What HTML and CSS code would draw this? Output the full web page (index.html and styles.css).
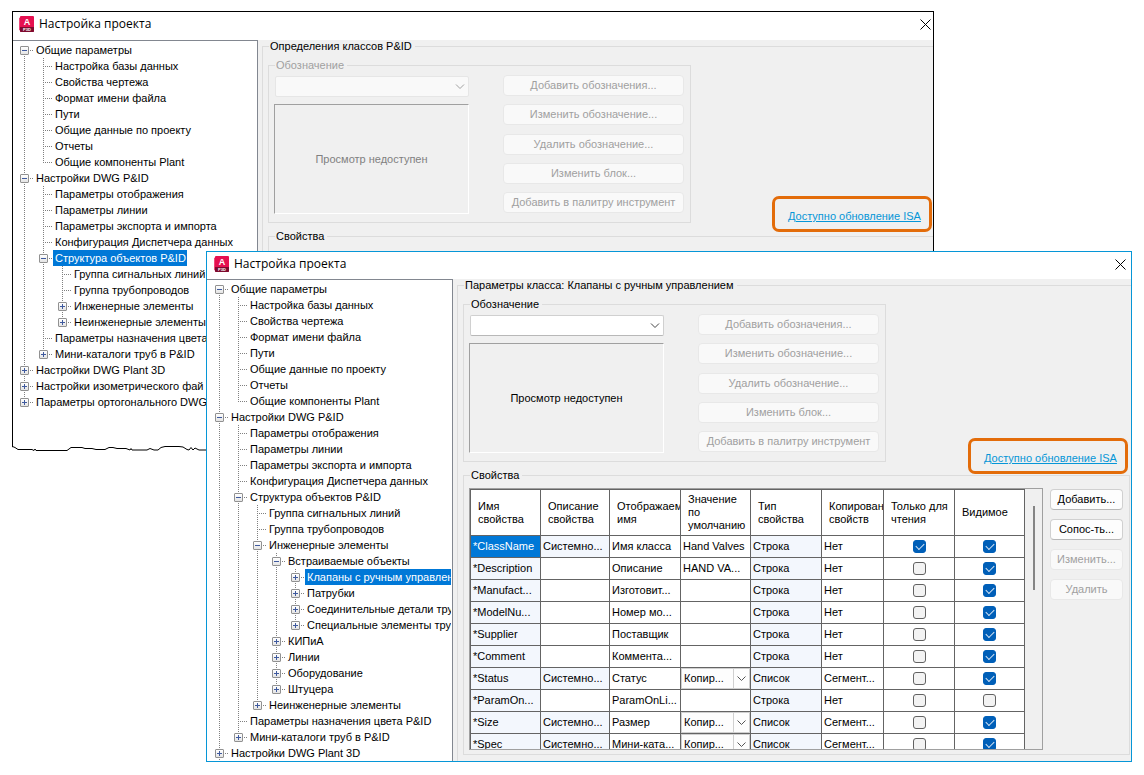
FILE: index.html
```html
<!DOCTYPE html>
<html lang="ru">
<head>
  <meta charset="UTF-8" />
  <title>Настройка проекта</title>
  <link rel="stylesheet" href="styles.css">
</head>
<body>
  <div class="desktop">

    <!-- back window -->
    <section class="window window-back">
      <header class="titlebar">
        <svg class="app-icon" viewBox="0 0 15 17">
          <path d="M0 2 L2 1 V15 L0 14 Z" fill="#f0477a" />
          <rect x="1" y="0" width="14" height="16" rx="1" fill="#e51050" />
          <path d="M1 11 H15 V15 Q15 16 14 16 H2 Q1 16 1 15 Z" fill="#7d0a2e" />
          <text class="icon-letter" x="8" y="9">A</text>
          <text class="icon-sub" x="8" y="15">P3D</text>
        </svg>
        <h1>Настройка проекта</h1>
        <button class="close" aria-label="Закрыть">
          <svg viewBox="0 0 11 11"><path d="M0.5 0.5 L10.5 10.5 M10.5 0.5 L0.5 10.5" /></svg>
        </button>
      </header>
      <div class="window-body">
        <nav class="tree">
          <ul>
            <li><button class="toggle"></button><span>Общие параметры</span>
              <ul>
                <li><span>Настройка базы данных</span></li>
                <li><span>Свойства чертежа</span></li>
                <li><span>Формат имени файла</span></li>
                <li><span>Пути</span></li>
                <li><span>Общие данные по проекту</span></li>
                <li><span>Отчеты</span></li>
                <li><span>Общие компоненты Plant</span></li>
              </ul>
            </li>
            <li><button class="toggle"></button><span>Настройки DWG P&amp;ID</span>
              <ul>
                <li><span>Параметры отображения</span></li>
                <li><span>Параметры линии</span></li>
                <li><span>Параметры экспорта и импорта</span></li>
                <li><span>Конфигурация Диспетчера данных</span></li>
                <li><button class="toggle"></button><span class="selected">Структура объектов P&amp;ID</span>
                  <ul>
                    <li><span>Группа сигнальных линий</span></li>
                    <li><span>Группа трубопроводов</span></li>
                    <li><button class="toggle plus"></button><span>Инженерные элементы</span></li>
                    <li><button class="toggle plus"></button><span>Неинженерные элементы</span></li>
                  </ul>
                </li>
                <li><span>Параметры назначения цвета</span></li>
                <li><button class="toggle plus"></button><span>Мини-каталоги труб в P&amp;ID</span></li>
              </ul>
            </li>
            <li><button class="toggle plus"></button><span>Настройки DWG Plant 3D</span></li>
            <li><button class="toggle plus"></button><span>Настройки изометрического фай</span></li>
            <li><button class="toggle plus"></button><span>Параметры ортогонального DWG</span></li>
          </ul>
        </nav>
        <main class="pane">
          <fieldset class="group outer">
            <legend>Определения классов P&amp;ID</legend>
            <div class="symbol-row">
              <fieldset class="group symbol" disabled>
                <legend>Обозначение</legend>
                <div class="symbol-left">
                  <select class="combo" aria-label="Обозначение"><option></option></select>
                  <div class="preview">Просмотр недоступен</div>
                </div>
                <div class="symbol-buttons">
                  <button class="btn" disabled>Добавить обозначения...</button>
                  <button class="btn" disabled>Изменить обозначение...</button>
                  <button class="btn" disabled>Удалить обозначение...</button>
                  <button class="btn" disabled>Изменить блок...</button>
                  <button class="btn" disabled>Добавить в палитру инструмент</button>
                </div>
              </fieldset>
              <div class="callout"><a href="#">Доступно обновление ISA</a></div>
            </div>
            <fieldset class="group props">
              <legend>Свойства</legend>
            </fieldset>
          </fieldset>
        </main>
      </div>
      <svg class="torn" viewBox="0 0 195 6">
        <path class="paper" d="M0 2 L6 4 H56 L59 2 H71 L76 4 H94 L97 2 H102 L106 4 H146 L152 2 H170 L176 4 H195 V6 H0 Z" />
        <path class="edge" d="M0.5 1.5 L3 2.5 L6 4.5 H20 L22 5.5 L23 4 L24 5.5 H55 L59 2.5 H70 L73 3.5 H80 L84 4.5 H93 L97 2.5 H101 L105 3.5 H114 L118 5 L119 3.5 L120 5 H135 L138 3.5 L142 5 H146 L149 2.5 L153 1.5 H167 L171 2 L175 4.5 L177 5 L179 2.5 L181 5 L183 3 L187 5 H195" />
      </svg>
    </section>

    <!-- front window -->
    <section class="window window-front">
      <header class="titlebar">
        <svg class="app-icon" viewBox="0 0 15 17">
          <path d="M0 2 L2 1 V15 L0 14 Z" fill="#f0477a" />
          <rect x="1" y="0" width="14" height="16" rx="1" fill="#e51050" />
          <path d="M1 11 H15 V15 Q15 16 14 16 H2 Q1 16 1 15 Z" fill="#7d0a2e" />
          <text class="icon-letter" x="8" y="9">A</text>
          <text class="icon-sub" x="8" y="15">P3D</text>
        </svg>
        <h1>Настройка проекта</h1>
        <button class="close" aria-label="Закрыть">
          <svg viewBox="0 0 11 11"><path d="M0.5 0.5 L10.5 10.5 M10.5 0.5 L0.5 10.5" /></svg>
        </button>
      </header>
      <div class="window-body">
        <nav class="tree">
          <ul>
            <li><button class="toggle"></button><span>Общие параметры</span>
              <ul>
                <li><span>Настройка базы данных</span></li>
                <li><span>Свойства чертежа</span></li>
                <li><span>Формат имени файла</span></li>
                <li><span>Пути</span></li>
                <li><span>Общие данные по проекту</span></li>
                <li><span>Отчеты</span></li>
                <li><span>Общие компоненты Plant</span></li>
              </ul>
            </li>
            <li><button class="toggle"></button><span>Настройки DWG P&amp;ID</span>
              <ul>
                <li><span>Параметры отображения</span></li>
                <li><span>Параметры линии</span></li>
                <li><span>Параметры экспорта и импорта</span></li>
                <li><span>Конфигурация Диспетчера данных</span></li>
                <li><button class="toggle"></button><span>Структура объектов P&amp;ID</span>
                  <ul>
                    <li><span>Группа сигнальных линий</span></li>
                    <li><span>Группа трубопроводов</span></li>
                    <li><button class="toggle"></button><span>Инженерные элементы</span>
                      <ul>
                        <li><button class="toggle"></button><span>Встраиваемые объекты</span>
                          <ul>
                            <li><button class="toggle plus"></button><span class="selected">Клапаны с ручным управлен</span></li>
                            <li><button class="toggle plus"></button><span>Патрубки</span></li>
                            <li><button class="toggle plus"></button><span>Соединительные детали труб</span></li>
                            <li><button class="toggle plus"></button><span>Специальные элементы труб</span></li>
                          </ul>
                        </li>
                        <li><button class="toggle plus"></button><span>КИПиА</span></li>
                        <li><button class="toggle plus"></button><span>Линии</span></li>
                        <li><button class="toggle plus"></button><span>Оборудование</span></li>
                        <li><button class="toggle plus"></button><span>Штуцера</span></li>
                      </ul>
                    </li>
                    <li><button class="toggle plus"></button><span>Неинженерные элементы</span></li>
                  </ul>
                </li>
                <li><span>Параметры назначения цвета P&amp;ID</span></li>
                <li><button class="toggle plus"></button><span>Мини-каталоги труб в P&amp;ID</span></li>
              </ul>
            </li>
            <li class="more"><button class="toggle plus"></button><span>Настройки DWG Plant 3D</span></li>
          </ul>
        </nav>
        <main class="pane">
          <fieldset class="group outer">
            <legend>Параметры класса: Клапаны с ручным управлением</legend>
            <div class="symbol-row">
              <fieldset class="group symbol">
                <legend>Обозначение</legend>
                <div class="symbol-left">
                  <select class="combo" aria-label="Обозначение"><option></option></select>
                  <div class="preview">Просмотр недоступен</div>
                </div>
                <div class="symbol-buttons">
                  <button class="btn" disabled>Добавить обозначения...</button>
                  <button class="btn" disabled>Изменить обозначение...</button>
                  <button class="btn" disabled>Удалить обозначение...</button>
                  <button class="btn" disabled>Изменить блок...</button>
                  <button class="btn" disabled>Добавить в палитру инструмент</button>
                </div>
              </fieldset>
              <div class="callout"><a href="#">Доступно обновление ISA</a></div>
            </div>
            <fieldset class="group props">
              <legend>Свойства</legend>
              <div class="grid-box">
                <table>
                  <colgroup>
                    <col class="w70"><col class="w69"><col class="w71"><col class="w70">
                    <col class="w71"><col class="w62"><col class="w71"><col class="w70">
                  </colgroup>
                  <thead>
                    <tr>
                      <th>Имя свойства</th>
                      <th>Описание свойства</th>
                      <th>Отображаемое имя</th>
                      <th>Значение по умолчанию</th>
                      <th>Тип свойства</th>
                      <th>Копирование свойств</th>
                      <th>Только для чтения</th>
                      <th>Видимое</th>
                    </tr>
                  </thead>
                  <tbody>
                    <tr>
                      <td class="current">*ClassName</td><td class="ro">Системно...</td><td>Имя класса</td><td>Hand Valves</td>
                      <td class="ro">Строка</td><td>Нет</td>
                      <td class="check"><input type="checkbox" aria-label="Только для чтения" checked></td>
                      <td class="check"><input type="checkbox" aria-label="Видимое" checked></td>
                    </tr>
                    <tr>
                      <td class="ro">*Description</td><td></td><td>Описание</td><td>HAND VA...</td>
                      <td class="ro">Строка</td><td>Нет</td>
                      <td class="check"><input type="checkbox" aria-label="Только для чтения"></td>
                      <td class="check"><input type="checkbox" aria-label="Видимое" checked></td>
                    </tr>
                    <tr>
                      <td class="ro">*Manufact...</td><td></td><td>Изготовит...</td><td></td>
                      <td class="ro">Строка</td><td>Нет</td>
                      <td class="check"><input type="checkbox" aria-label="Только для чтения"></td>
                      <td class="check"><input type="checkbox" aria-label="Видимое" checked></td>
                    </tr>
                    <tr>
                      <td class="ro">*ModelNu...</td><td></td><td>Номер мо...</td><td></td>
                      <td class="ro">Строка</td><td>Нет</td>
                      <td class="check"><input type="checkbox" aria-label="Только для чтения"></td>
                      <td class="check"><input type="checkbox" aria-label="Видимое" checked></td>
                    </tr>
                    <tr>
                      <td class="ro">*Supplier</td><td></td><td>Поставщик</td><td></td>
                      <td class="ro">Строка</td><td>Нет</td>
                      <td class="check"><input type="checkbox" aria-label="Только для чтения"></td>
                      <td class="check"><input type="checkbox" aria-label="Видимое" checked></td>
                    </tr>
                    <tr>
                      <td class="ro">*Comment</td><td></td><td>Коммента...</td><td></td>
                      <td class="ro">Строка</td><td>Нет</td>
                      <td class="check"><input type="checkbox" aria-label="Только для чтения"></td>
                      <td class="check"><input type="checkbox" aria-label="Видимое" checked></td>
                    </tr>
                    <tr>
                      <td class="ro">*Status</td><td class="ro">Системно...</td><td>Статус</td>
                      <td class="pick"><select aria-label="Значение по умолчанию"><option>Копир...</option></select></td>
                      <td class="ro">Список</td><td>Сегмент...</td>
                      <td class="check"><input type="checkbox" aria-label="Только для чтения"></td>
                      <td class="check"><input type="checkbox" aria-label="Видимое" checked></td>
                    </tr>
                    <tr>
                      <td class="ro">*ParamOn...</td><td></td><td>ParamOnLi...</td><td></td>
                      <td class="ro">Строка</td><td>Нет</td>
                      <td class="check"><input type="checkbox" aria-label="Только для чтения"></td>
                      <td class="check"><input type="checkbox" aria-label="Видимое"></td>
                    </tr>
                    <tr>
                      <td class="ro">*Size</td><td class="ro">Системно...</td><td>Размер</td>
                      <td class="pick"><select aria-label="Значение по умолчанию"><option>Копир...</option></select></td>
                      <td class="ro">Список</td><td>Сегмент...</td>
                      <td class="check"><input type="checkbox" aria-label="Только для чтения"></td>
                      <td class="check"><input type="checkbox" aria-label="Видимое" checked></td>
                    </tr>
                    <tr>
                      <td class="ro">*Spec</td><td class="ro">Системно...</td><td>Мини-ката...</td>
                      <td class="pick"><select aria-label="Значение по умолчанию"><option>Копир...</option></select></td>
                      <td class="ro">Список</td><td>Сегмент...</td>
                      <td class="check"><input type="checkbox" aria-label="Только для чтения"></td>
                      <td class="check"><input type="checkbox" aria-label="Видимое" checked></td>
                    </tr>
                  </tbody>
                </table>
                <div class="scrollbar"><div class="thumb"></div></div>
              </div>
              <div class="side-buttons">
                <button class="btn">Добавить...</button>
                <button class="btn">Сопос-ть...</button>
                <button class="btn" disabled>Изменить...</button>
                <button class="btn" disabled>Удалить</button>
              </div>
            </fieldset>
          </fieldset>
        </main>
      </div>
    </section>

  </div>
</body>
</html>
```
FILE: styles.css
```css
* {
  box-sizing: border-box;
}
body {
  margin: 0;
  background: #fff;
  color: #000;
  font-family: "Liberation Sans", Arial, sans-serif;
  font-size: 11px;
  line-height: 13px;
}
button, select, input {
  font: inherit;
  margin: 0;
}
.desktop {
  position: relative;
  height: 100vh;
  min-height: 600px;
  overflow: hidden;
}

/* windows */
.window {
  position: absolute;
  display: flex;
  flex-direction: column;
  background: #fff;
}
.window-back {
  top: 11px;
  left: 12px;
  right: 210px;
  border: 1px solid #000;
  border-bottom: none;
}
.window-front {
  top: 251px;
  left: 206px;
  right: 12px;
  bottom: 13px;
  border: 1px solid #0696d7;
}
.titlebar {
  display: flex;
  align-items: center;
  flex: none;
  height: 27px;
  padding: 0 5px 3px 7px;
}
.window-back .titlebar {
  height: 28px;
  padding: 0 2px 4px 6px;
}
.app-icon {
  width: 15px;
  height: 17px;
}
.icon-letter {
  font-size: 9px;
  font-weight: bold;
  fill: #fff;
  text-anchor: middle;
}
.icon-sub {
  font-size: 4px;
  font-weight: bold;
  fill: #fff;
  text-anchor: middle;
}
.titlebar h1 {
  margin: 0 auto 0 5px;
  font-family: "Open Sans", "Segoe UI", sans-serif;
  font-size: 12px;
  font-weight: normal;
  line-height: 16px;
}
.close {
  width: 11px;
  height: 11px;
  padding: 0;
  border: none;
  background: none;
}
.close svg {
  display: block;
  width: 11px;
  height: 11px;
  stroke: #000;
  fill: none;
}
.window-body {
  display: flex;
  flex: 1;
  min-height: 0;
}

/* tree */
.tree {
  flex: none;
  width: 246px;
  padding: 1px 1px 0 3px;
  border-top: 1px solid #828790;
  border-right: 1px solid #828790;
  background: #fff;
  overflow: hidden;
}
.window-back .tree {
  width: 245px;
  padding: 1px 1px 35px 2px;
}
.tree ul {
  margin: 0;
  padding: 0;
  list-style: none;
}
.tree > ul {
  overflow: hidden;
}
.tree ul ul {
  padding-left: 19px;
}
.tree li {
  position: relative;
  line-height: 16px;
  white-space: nowrap;
}
.tree li::before {
  content: "";
  position: absolute;
  left: 9px;
  top: 0;
  bottom: 0;
  width: 1px;
  background: repeating-linear-gradient(#808080 0 1px, transparent 1px 2px);
}
.tree li:last-child::before {
  bottom: auto;
  height: 9px;
}
.tree > ul > li:first-child::before {
  top: 8px;
}
.tree li.more::before {
  height: 16px;
}
.tree li::after {
  content: "";
  position: absolute;
  left: 11px;
  top: 8px;
  width: 8px;
  height: 1px;
  background: repeating-linear-gradient(90deg, #808080 0 1px, transparent 1px 2px);
}
.tree span {
  display: inline-block;
  height: 16px;
  margin-left: 19px;
  padding: 0 1px 0 2px;
  vertical-align: top;
}
.tree span.selected {
  background: #0078d7;
  color: #fff;
}
.toggle {
  position: absolute;
  z-index: 1;
  left: 5px;
  top: 4px;
  width: 9px;
  height: 9px;
  padding: 0;
  border: 1px solid #919191;
  border-radius: 1px;
  background: linear-gradient(#3f5a9e, #3f5a9e) 1px 3px / 5px 1px no-repeat, linear-gradient(#fff, #e4e4e4);
}
.toggle.plus {
  background: linear-gradient(#3f5a9e, #3f5a9e) 1px 3px / 5px 1px no-repeat,
    linear-gradient(#3f5a9e, #3f5a9e) 3px 1px / 1px 5px no-repeat, linear-gradient(#fff, #e4e4e4);
}

/* torn bottom edge */
.torn {
  display: block;
  flex: none;
  width: 195px;
  height: 6px;
  margin-left: -1px;
}
.torn .paper {
  fill: #fff;
}
.torn .edge {
  fill: none;
  stroke: #000;
}

/* right pane */
.pane {
  display: flex;
  flex: 1;
  min-width: 0;
  padding-left: 4px;
  background: #f0f0f0;
}
.group {
  min-width: 0;
  margin: 0;
  padding: 0;
  border: 1px solid #dcdcdc;
}
.group legend {
  margin-left: 1px;
  padding: 0 3px 0 1px;
}
.outer {
  display: flex;
  flex: 1;
  flex-direction: column;
  padding: 6px 1px 6px 5px;
  border-right: none;
  border-bottom: none;
}
.window-back .outer {
  padding-right: 0;
}
.window-back .props {
  border-right: none;
}
.symbol-row {
  display: flex;
  justify-content: space-between;
  margin-bottom: 7px;
}
.symbol {
  display: flex;
  gap: 34px;
  padding: 3px 6px 8px 5px;
}
.symbol[disabled] {
  color: #a0a0a0;
}
.symbol-left {
  display: flex;
  flex-direction: column;
  gap: 7px;
  width: 195px;
  padding-top: 1px;
}
.combo {
  height: 21px;
  margin-left: 1px;
  padding: 0 4px;
  appearance: none;
  border: 1px solid #d0d0d0;
  border-bottom-color: #b8b8b8;
  border-radius: 2px;
  background: #fff url("data:image/svg+xml,%3Csvg xmlns='http://www.w3.org/2000/svg' width='10' height='6'%3E%3Cpath d='M1 0.5 L5 4.5 L9 0.5' fill='none' stroke='%23444'/%3E%3C/svg%3E") right 3px center no-repeat;
}
.combo:disabled {
  border-color: #e6e6e6;
  background-color: #f9f9f9;
  background-image: url("data:image/svg+xml,%3Csvg xmlns='http://www.w3.org/2000/svg' width='10' height='6'%3E%3Cpath d='M1 0.5 L5 4.5 L9 0.5' fill='none' stroke='%23a0a0a0'/%3E%3C/svg%3E");
  opacity: 1;
}
.preview {
  display: flex;
  align-items: center;
  justify-content: center;
  height: 110px;
  border: 1px solid;
  border-color: #a0a0a0 #fff #fff #a0a0a0;
}
.symbol[disabled] .preview {
  color: #808080;
  border-color: #a0a0a0 #fff #fff #a0a0a0;
}
.symbol-buttons {
  display: flex;
  flex-direction: column;
  justify-content: space-between;
  width: 181px;
  padding-bottom: 1px;
}
.btn {
  height: 21px;
  padding: 0;
  border: 1px solid #d0d0d0;
  border-bottom-color: #b8b8b8;
  border-radius: 4px;
  background: #fdfdfd;
  color: #000;
  white-space: nowrap;
}
.btn:disabled {
  border-color: #e8e8e8;
  background: #f9f9f9;
  color: #a0a0a0;
}
.callout {
  align-self: flex-end;
  width: 160px;
  height: 36px;
  margin: 0 2px -12px 0;
  padding: 11px 0 0 13px;
  border: 3px solid #e36c0a;
  border-radius: 7px;
}
.window-back .callout {
  margin: 0 1px -9px 0;
}
.callout a {
  color: #0696d7;
}

/* properties */
.props {
  display: flex;
  flex: 1;
  gap: 7px;
  min-height: 0;
  padding: 6px 6px 4px 5px;
}
.grid-box {
  display: flex;
  flex: 1;
  min-width: 0;
  min-height: 0;
  align-items: flex-start;
  border: 1px solid #a0a0a0;
  overflow: hidden;
}
table {
  flex: none;
  width: 555px;
  border-collapse: collapse;
  table-layout: fixed;
  background: #fff;
}
.w62 { width: 62px; }
.w69 { width: 69px; }
.w70 { width: 70px; }
.w71 { width: 71px; }
th, td {
  border: 1px solid #646464;
  padding: 0 0 0 2px;
  text-align: left;
  font-weight: normal;
  white-space: nowrap;
  overflow: hidden;
}
th {
  height: 46px;
  padding: 0 0 0 7px;
  white-space: normal;
}
td {
  height: 22px;
}
.ro {
  background: #f3f7fd;
}
.current {
  background: #0078d7;
  color: #fff;
}
td.check {
  padding: 0;
  text-align: center;
}
td.check input {
  display: block;
  position: relative;
  width: 13px;
  height: 13px;
  margin: 0 auto;
  appearance: none;
  border: 1px solid #626262;
  border-radius: 3px;
  background: #f3f3f3;
}
td.check input:checked {
  border-color: #005fb8;
  background: #005fb8;
}
td.check input:checked::after {
  content: "";
  position: absolute;
  left: 2px;
  top: 2px;
  width: 7px;
  height: 4px;
  border: solid #d5e5f5;
  border-width: 0 0 1px 1px;
  transform: rotate(-45deg);
}
td.pick {
  padding: 0;
}
td.pick select {
  display: block;
  width: 100%;
  height: 21px;
  padding: 0 0 0 2px;
  appearance: none;
  border: 1px solid #d0d0d0;
  border-radius: 0;
  background: linear-gradient(#d0d0d0, #d0d0d0) right 15px top / 1px 100% no-repeat,
    url("data:image/svg+xml,%3Csvg xmlns='http://www.w3.org/2000/svg' width='9' height='6'%3E%3Cpath d='M0.5 0.5 L4.5 4.5 L8.5 0.5' fill='none' stroke='%23555'/%3E%3C/svg%3E") right 3px center no-repeat, #fdfdfd;
}
.scrollbar {
  flex: 1;
  padding-top: 17px;
}
.thumb {
  width: 2px;
  height: 84px;
  margin: 0 auto;
  background: #858585;
}
.side-buttons {
  display: flex;
  flex: none;
  flex-direction: column;
  gap: 9px;
  width: 73px;
  padding-top: 1px;
}
```
